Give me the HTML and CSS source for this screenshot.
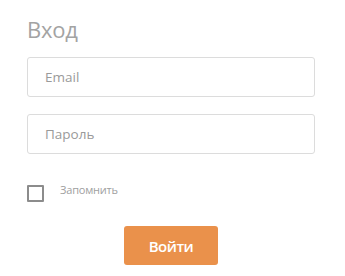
FILE: index.html
```html
<!DOCTYPE html>
<html lang="ru">
<head>
<meta charset="utf-8">
<link rel="stylesheet" href="styles.css">
</head>
<body>
<form class="login">
  <h1 class="title">Вход</h1>
  <input class="field" type="text" placeholder="Email">
  <input class="field field-pass" type="password" placeholder="Пароль">
  <label class="remember">
    <span class="box"></span>
    <span class="remember-text">Запомнить</span>
  </label>
  <div class="actions">
    <button class="submit" type="button">Войти</button>
  </div>
</form>
</body>
</html>
```

FILE: styles.css
```css
html, body {
  margin: 0;
  padding: 0;
  background: #fff;
}
body {
  font-family: "Open Sans", "Noto Sans", sans-serif;
}
.login {
  width: 288px;
  margin-left: 27px;
  padding-top: 14px;
  display: flex;
  flex-direction: column;
}
.title {
  margin: 0;
  font-size: 22px;
  font-weight: 400;
  color: #a3a3a3;
  line-height: 30px;
  height: 30px;
  letter-spacing: -0.2px;
}
.field {
  box-sizing: border-box;
  height: 40px;
  width: 288px;
  border: 1px solid #dcdcdc;
  border-radius: 3px;
  padding: 0 17px;
  font-family: inherit;
  font-size: 13.5px;
  color: #555;
  outline: none;
  margin-top: 13px;
}
.field::placeholder {
  color: #9a9a9a;
}
.field-pass {
  margin-top: 17px;
}
.remember {
  display: flex;
  align-items: center;
  margin-top: 31px;
  height: 17px;
}
.box {
  box-sizing: border-box;
  width: 17px;
  height: 17px;
  border: 2px solid #8c8c8c;
  border-radius: 1px;
}
.remember-text {
  margin-left: 16px;
  font-size: 11px;
  color: #a0a0a0;
  position: relative;
  top: -4px;
  letter-spacing: -0.2px;
}
.actions {
  display: flex;
  justify-content: center;
  margin-top: 24px;
}
.submit {
  width: 94px;
  height: 39px;
  border: none;
  border-radius: 3px;
  background: #ea914b;
  color: #fff;
  font-family: inherit;
  font-size: 15px;
  font-weight: 600;
  letter-spacing: -0.5px;
  padding: 0;
}
```
